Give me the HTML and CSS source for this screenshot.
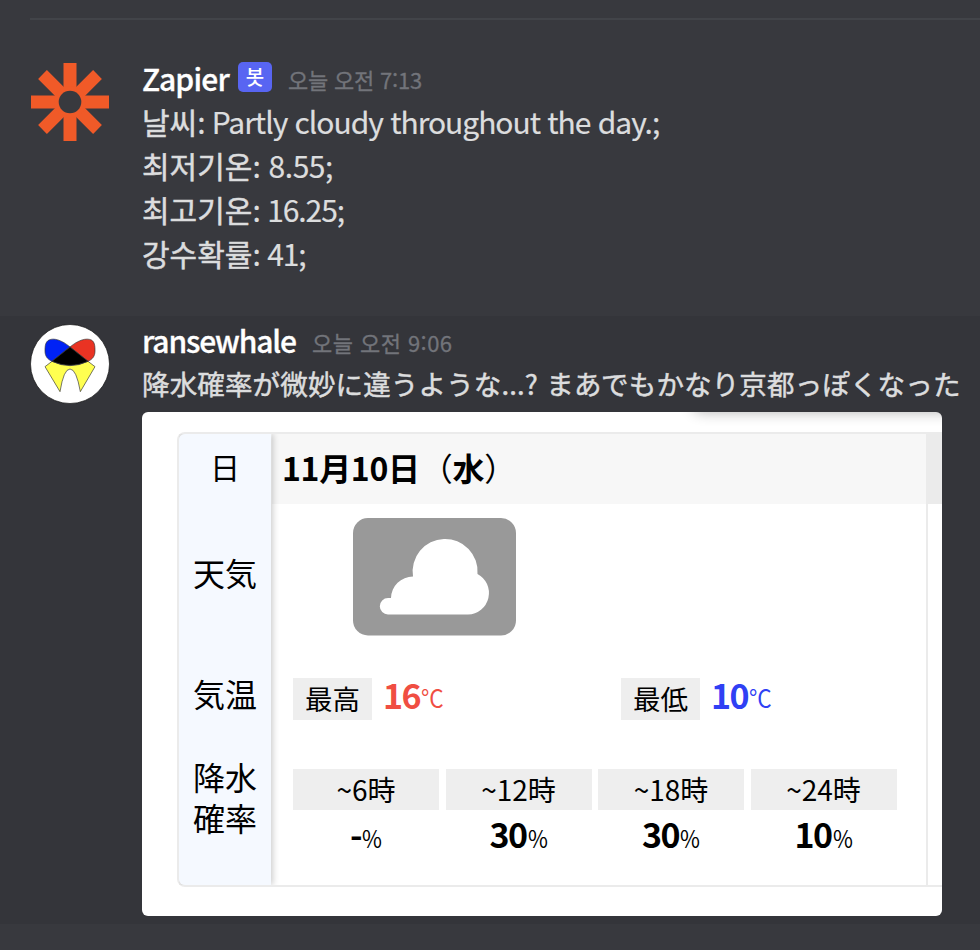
FILE: index.html
```
<!DOCTYPE html>
<html lang="ko">
<head>
<meta charset="utf-8">
<title>Chat</title>
<link rel="stylesheet" href="styles.css">
</head>
<body>
<main class="chat">
  <div class="divider"></div>
  <article class="message first">
    <svg class="avatar" viewBox="-40 -40 80 80">
      <g stroke="#f05a28" stroke-width="13">
        <path d="M0-39V39M-39 0H39"/>
        <path stroke-width="12.4" d="M-27.5-27.5L27.5 27.5M27.5-27.5L-27.5 27.5"/>
      </g>
      <circle r="16" fill="#f05a28"/>
      <circle r="11.3" fill="#38393e"/>
    </svg>
    <div class="body">
      <header class="head"><b class="name zapier">Zapier</b><span class="badge">봇</span><time class="time"><span>오늘 오전</span> 7:13</time></header>
      <p class="line"><span>날씨</span><span class="latin sentence">: Partly cloudy throughout the day.;</span></p>
      <p class="line"><span>최저기온</span><span class="latin">: 8.55;</span></p>
      <p class="line"><span>최고기온</span><span class="latin wide">: 16.25;</span></p>
      <p class="line"><span>강수확률</span><span class="latin wide">: 41;</span></p>
    </div>
  </article>
  <article class="message second">
    <svg class="avatar" viewBox="30 27 240 240">
      <circle cx="150" cy="147" r="118.5" fill="#fff" stroke="#111" stroke-width="2"/>
      <g stroke="#333" stroke-width="2">
        <path fill="#ffff50" d="M96 139Q150 165 204 139L225 155L181 230Q169 162 150 162Q131 162 120 230L75 155Z"/>
        <path fill="#0022f5" d="M150 96C125 75 101 68 87 75C76 81 75 92 75 108C75 124 83 133 96 139Z"/>
        <path fill="#e93323" d="M150 96C175 75 199 68 214 75C224 81 225 92 225 108C225 124 217 133 204 139Z"/>
        <path fill="#000" d="M150 96L204 139Q150 163 96 139Z"/>
      </g>
    </svg>
    <div class="body">
      <header class="head"><b class="name whale">ransewhale</b><time class="time"><span>오늘 오전</span> 9:06</time></header>
      <p class="line japanese" lang="ja">降水確率が微妙に違うような<span class="dots">...? </span>まあでもかなり京都っぽくなった</p>
      <section class="photo" lang="ja">
        <div class="shade"></div>
        <div class="forecast">
          <div class="labels">
            <span class="label date-label">日</span>
            <span class="label sky-label">天気</span>
            <span class="label temp-label">気温</span>
            <span class="label rain-label">降水<br>確率</span>
          </div>
          <div class="day">
            <h2 class="date"><span class="md">11月10日</span><span class="wd"><span class="paren">（</span>水<span class="paren">）</span></span></h2>
            <div class="sky">
              <svg width="163" height="118" viewBox="0 0 163 118">
                <rect width="163" height="117.500" rx="15" fill="#999"/>
                <path fill="#fff" d="M35 96.500A8.200 8.200 0 0 1 35 80.100H38A22 22 0 0 1 60 58.500A32.500 32.500 0 1 1 124.500 56A21.500 21.500 0 0 1 115 96.500Z"/>
              </svg>
            </div>
            <div class="temps">
              <div class="temp high"><span class="tag">最高</span><b>16</b><i>°C</i></div>
              <div class="temp low"><span class="tag">最低</span><b>10</b><i>°C</i></div>
            </div>
            <div class="rain">
              <div class="slot"><span class="hour">~6時</span><p><b>-</b><i>%</i></p></div>
              <div class="slot"><span class="hour">~12時</span><p><b>30</b><i>%</i></p></div>
              <div class="slot"><span class="hour">~18時</span><p><b>30</b><i>%</i></p></div>
              <div class="slot"><span class="hour">~24時</span><p><b>10</b><i>%</i></p></div>
            </div>
          </div>
          <div class="next"><div class="next-head"></div></div>
        </div>
      </section>
    </div>
  </article>
</main>
</body>
</html>
```
FILE: styles.css
```
* { box-sizing: border-box; margin: 0; padding: 0; }
body { background: #38393e; font-family: "Noto Sans CJK KR", sans-serif; }
.chat { width: 980px; height: 950px; overflow: hidden; padding-top: 18px; }
.divider { height: 2px; margin-left: 30px; background: #424449; }
.message { display: flex; padding-left: 30px; }
.first { height: 296px; padding-top: 36px; }
.second { height: 608px; background: #34353a; padding-top: 4px; }
.avatar { width: 80px; height: 80px; flex: none; margin: 4px 32px 0 0; }
.first .avatar { margin-top: 6px; }
.body { width: 830px; }
.head { display: flex; height: 44px; line-height: 44px; white-space: nowrap; }
.name { color: #fff; font-size: 30px; font-weight: 500; -webkit-text-stroke: .3px #fff; }
.zapier { letter-spacing: -.800px; }
.whale { letter-spacing: -1.150px; }
.badge { width: 34px; height: 30px; margin: 6px 16px 0 9px; border-radius: 5px; background: #5865f2; color: #fff; font-size: 20px; font-weight: 500; line-height: 29px; text-align: center; }
.time { color: #72747a; font-size: 22px; line-height: 47px; -webkit-text-stroke: .3px #72747a; }
.first .time { letter-spacing: -.200px; }
.whale + .time { margin-left: 16px; letter-spacing: .450px; }
.line { height: 44px; line-height: 43px; font-size: 30px; color: #dcddde; white-space: nowrap; -webkit-text-stroke: .5px #dcddde; }
.latin { font-family: "Noto Sans CJK JP", sans-serif; font-feature-settings: "calt" 0, "locl" 0, "case" 0; letter-spacing: -.450px; word-spacing: 2px; -webkit-text-stroke-width: .2px; }
.wide { letter-spacing: -1.100px; }
.sentence { letter-spacing: -1.020px; word-spacing: 1.600px; }
.japanese { font-family: "Noto Sans CJK JP", sans-serif; font-size: 27.500px; letter-spacing: .150px; }
.dots { margin-right: 2px; }
.second .head { height: 42px; line-height: 40px; }
.second .time { line-height: 44px; }
.photo { position: relative; width: 800px; height: 504px; padding: 20px 0 0 35px; margin-top: 6px; border-radius: 6px; background: #fff; overflow: hidden; font-family: "Noto Sans CJK JP", sans-serif; color: #000; }
.shade { position: absolute; left: 550px; right: -20px; top: -20px; height: 20px; border-radius: 12px; box-shadow: 0 0 14px rgba(0,0,0,.3); }
.forecast { display: flex; height: 455px; border: 2px solid #ebebeb; border-right: 0; border-radius: 8px 0 0 8px; }
.labels { position: relative; width: 92px; margin-right: 1px; border-radius: 6px 0 0 6px; background: #f5f9ff; box-shadow: 2px 0 6px rgba(0,0,0,.2); clip-path: inset(0 -12px 0 0); text-align: center; font-size: 32px; line-height: 41px; }
.label { display: block; }
.date-label { padding-top: 12px; font-size: 30px; }
.sky-label { padding-top: 65px; }
.temp-label { padding-top: 80px; }
.rain-label { padding-top: 42px; }
.day { width: 654px; }
.date { height: 70px; padding-left: 10px; background: #f7f7f7; font-size: 32px; line-height: 66px; display: flex; letter-spacing: -.300px; }
.wd { margin-left: 1px; }
.paren { font-weight: 400; }
.sky { padding: 14px 0 0 81px; height: 174px; }
.temps { display: flex; padding-left: 21px; height: 91px; }
.temp { display: flex; flex: none; width: 328px; line-height: 33px; }
.tag { width: 79px; height: 42px; margin-right: 11px; background: #eee; color: #000; font-size: 27.500px; line-height: 41px; text-align: center; }
b { font-weight: 700; font-size: 34px; letter-spacing: -1.500px; }
.name { font-size: 30px; }
i { display: inline-block; font-style: normal; transform-origin: 0 50%; transform: scaleX(.9); }
.temp i { font-size: 25px; line-height: 39px; margin-left: 1px; }
.high { color: #f04e42; }
.low { color: #2f40f4; }
.rain { display: grid; grid-template-columns: repeat(4, 146px); gap: 6.500px; padding-left: 21px; }
.slot { text-align: center; }
.hour { display: block; height: 41px; background: #eee; font-size: 28px; line-height: 41px; }
.slot p { height: 47px; line-height: 47px; }
.slot i { font-size: 24px; margin: 0 -2px 0 1px; }
.next { flex: 1; border-left: 2px solid #ebebeb; }
.next-head { height: 70px; background: #ebebeb; }
```
